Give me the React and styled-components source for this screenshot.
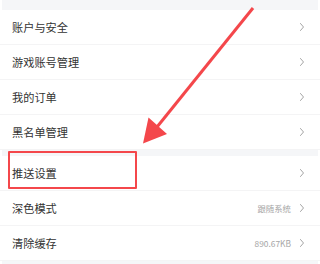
import React from "react";
import styled, { createGlobalStyle } from "styled-components";

const GlobalStyle = createGlobalStyle`
  html, body {
    margin: 0;
    padding: 0;
    background: #fff;
  }
  body {
    font-family: "Noto Sans CJK SC", "Noto Sans", "Liberation Sans", sans-serif;
  }
`;

const Page = styled.div`
  position: relative;
  width: 320px;
  height: 264px;
  overflow: hidden;
  background: #fff;
  display: flex;
  flex-direction: column;
`;

const Band = styled.div`
  height: ${(p) => p.$h}px;
  flex: ${(p) => (p.$fill ? "1" : "none")};
  margin: 0 2px;
  background: #f5f6f8;
`;

const Group = styled.div`
  display: flex;
  flex-direction: column;
`;

const Row = styled.div`
  height: 34px;
  border-bottom: 1px solid #f4f4f5;
  display: flex;
  align-items: center;
  padding: 0 16px 0 12px;
`;

const Label = styled.span`
  flex: 1;
  font-size: 11.2px;
  color: #333;
  letter-spacing: 0;
`;

const Value = styled.span`
  font-size: 8.4px;
  color: #a6a6a6;
  margin-right: 9px;
`;

const Chevron = styled.svg`
  width: 4px;
  height: 8px;
  color: #9a9a9a;
  flex: none;
`;

const Highlight = styled.div`
  position: absolute;
  left: 8px;
  top: 151px;
  width: 125px;
  height: 34px;
  border: 2px solid #f4474b;
  border-radius: 1px;
`;

const Overlay = styled.svg`
  position: absolute;
  left: 0;
  top: 0;
  width: 320px;
  height: 264px;
  pointer-events: none;
`;

const groups = [
  [
    { label: "账户与安全" },
    { label: "游戏账号管理" },
    { label: "我的订单" },
    { label: "黑名单管理" },
  ],
  [
    { label: "推送设置" },
    { label: "深色模式", value: "跟随系统" },
    { label: "清除缓存", value: "890.67KB" },
  ],
];

const Arrow = () => (
  <Chevron viewBox="0 0 4 8" fill="none">
    <path d="M0.5 0.5 L3.5 4 L0.5 7.5" stroke="currentColor" strokeWidth="0.9" strokeLinecap="round" strokeLinejoin="round" />
  </Chevron>
);

export default function App() {
  return (
    <>
      <GlobalStyle />
      <Page>
        <Band $h={10} />
        {groups.map((items, gi) => (
          <React.Fragment key={gi}>
            {gi > 0 && <Band $h={6} />}
            <Group>
              {items.map((item) => (
                <Row key={item.label}>
                  <Label>{item.label}</Label>
                  {item.value && <Value>{item.value}</Value>}
                  <Arrow />
                </Row>
              ))}
            </Group>
          </React.Fragment>
        ))}
        <Band $fill />
        <Highlight />
        <Overlay viewBox="0 0 320 264">
          <line x1="253" y1="8" x2="157" y2="127" stroke="#f4474b" strokeWidth="3" />
          <polygon points="148.5,117.5 167,134 143,143.5" fill="#f4474b" />
        </Overlay>
      </Page>
    </>
  );
}
